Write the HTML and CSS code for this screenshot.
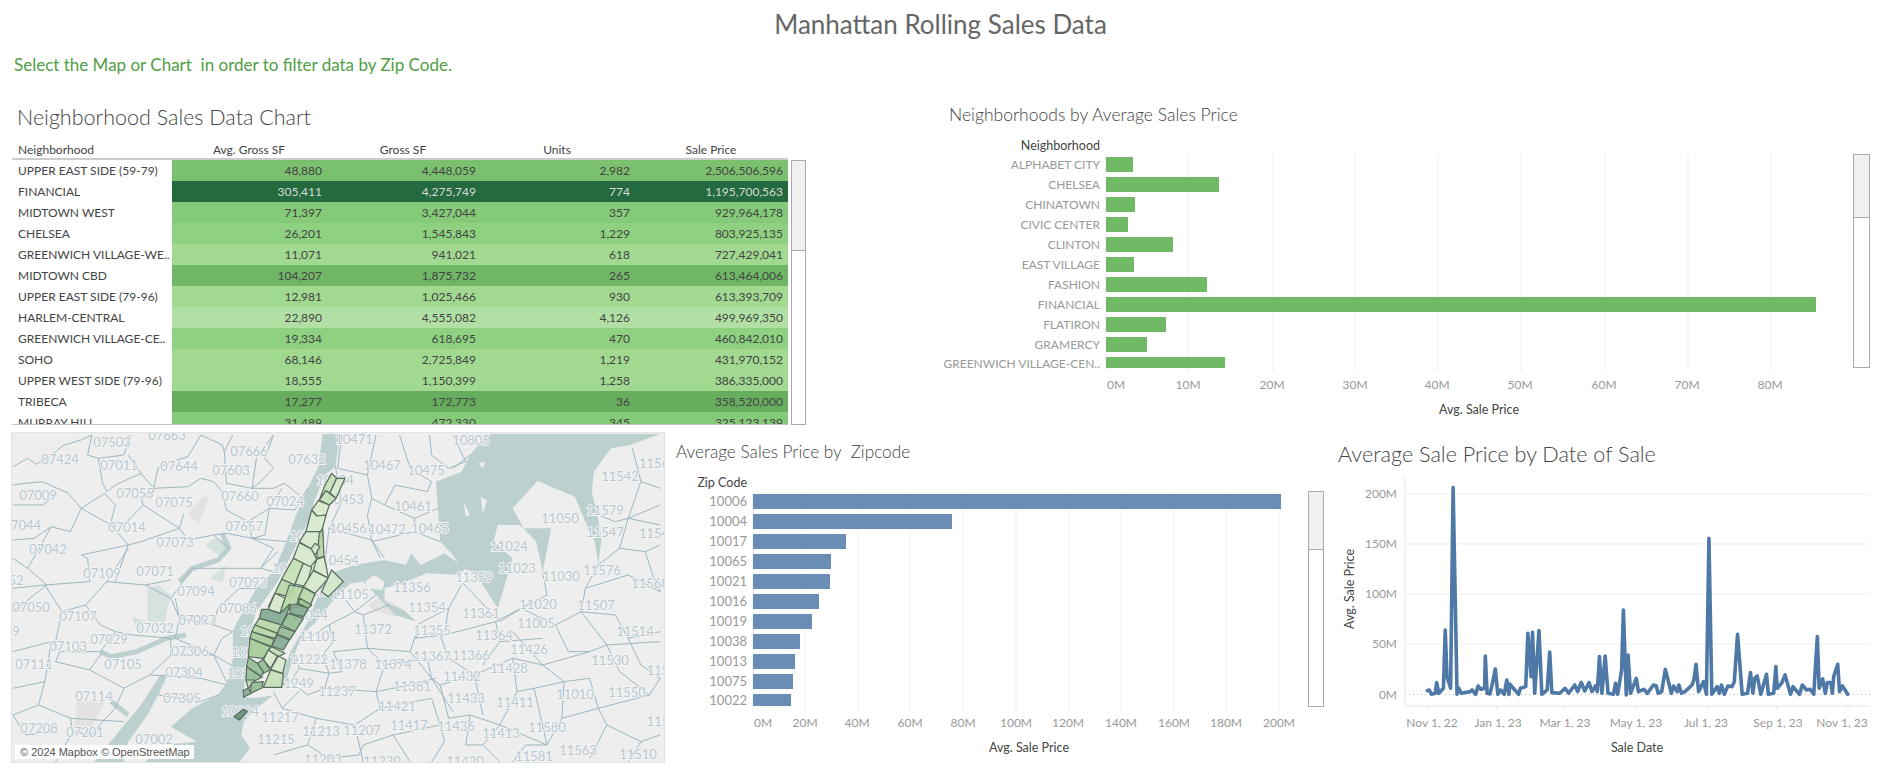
FILE: index.html
```html
<!DOCTYPE html>
<html lang="en">
<head>
    <meta charset="UTF-8">
    <meta name="viewport" content="width=device-width, initial-scale=1.0">
    <title>Manhattan Rolling Sales Data</title>
    <link rel="stylesheet" href="styles.css">
</head>
<body>
<div class="dashboard">
    <h1 class="page-title">Manhattan Rolling Sales Data</h1>
    <p class="hint">Select the Map or Chart&nbsp; in order to filter data by Zip Code.</p>

    <div class="row row-top">
        <section class="sales-panel">
            <h2 class="title-large">Neighborhood Sales Data Chart</h2>
            <div class="sales-head">
                <div class="cell-name">Neighborhood</div>
                <div>Avg. Gross SF</div>
                <div>Gross SF</div>
                <div>Units</div>
                <div>Sale Price</div>
            </div>
            <div class="sales-wrap">
                <div class="sales-body">
                    <div class="sales-row"><div class="cell-name">UPPER EAST SIDE (59-79)</div><div class="shade-3">48,880</div><div class="shade-3">4,448,059</div><div class="shade-3">2,982</div><div class="shade-3">2,506,506,596</div></div>
                    <div class="sales-row"><div class="cell-name">FINANCIAL</div><div class="shade-dark">305,411</div><div class="shade-dark">4,275,749</div><div class="shade-dark">774</div><div class="shade-dark">1,195,700,563</div></div>
                    <div class="sales-row"><div class="cell-name">MIDTOWN WEST</div><div class="shade-4">71,397</div><div class="shade-4">3,427,044</div><div class="shade-4">357</div><div class="shade-4">929,964,178</div></div>
                    <div class="sales-row"><div class="cell-name">CHELSEA</div><div class="shade-5">26,201</div><div class="shade-5">1,545,843</div><div class="shade-5">1,229</div><div class="shade-5">803,925,135</div></div>
                    <div class="sales-row"><div class="cell-name">GREENWICH VILLAGE-WE..</div><div class="shade-6">11,071</div><div class="shade-6">941,021</div><div class="shade-6">618</div><div class="shade-6">727,429,041</div></div>
                    <div class="sales-row"><div class="cell-name">MIDTOWN CBD</div><div class="shade-2">104,207</div><div class="shade-2">1,875,732</div><div class="shade-2">265</div><div class="shade-2">613,464,006</div></div>
                    <div class="sales-row"><div class="cell-name">UPPER EAST SIDE (79-96)</div><div class="shade-6">12,981</div><div class="shade-6">1,025,466</div><div class="shade-6">930</div><div class="shade-6">613,393,709</div></div>
                    <div class="sales-row"><div class="cell-name">HARLEM-CENTRAL</div><div class="shade-7">22,890</div><div class="shade-7">4,555,082</div><div class="shade-7">4,126</div><div class="shade-7">499,969,350</div></div>
                    <div class="sales-row"><div class="cell-name">GREENWICH VILLAGE-CE..</div><div class="shade-5">19,334</div><div class="shade-5">618,695</div><div class="shade-5">470</div><div class="shade-5">460,842,010</div></div>
                    <div class="sales-row"><div class="cell-name">SOHO</div><div class="shade-6">68,146</div><div class="shade-6">2,725,849</div><div class="shade-6">1,219</div><div class="shade-6">431,970,152</div></div>
                    <div class="sales-row"><div class="cell-name">UPPER WEST SIDE (79-96)</div><div class="shade-6">18,555</div><div class="shade-6">1,150,399</div><div class="shade-6">1,258</div><div class="shade-6">386,335,000</div></div>
                    <div class="sales-row"><div class="cell-name">TRIBECA</div><div class="shade-1">17,277</div><div class="shade-1">172,773</div><div class="shade-1">36</div><div class="shade-1">358,520,000</div></div>
                    <div class="sales-row"><div class="cell-name">MURRAY HILL</div><div class="shade-4">31,489</div><div class="shade-4">472,330</div><div class="shade-4">345</div><div class="shade-4">325,123,139</div></div>
                </div>
                <div class="scroller scroller-table"><div class="thumb thumb-table"></div></div>
            </div>
        </section>

        <section class="neighborhood-panel">
            <h2 class="title-small">Neighborhoods by Average Sales Price</h2>
            <div class="chart-row">
                <svg class="chart" width="920" height="290" viewBox="930 134 920 290">
                    <g class="grid">
                        <path d="M1106 154V372M1188 154V372M1273 154V372M1355 154V372M1438 154V372M1521 154V372M1605 154V372M1688 154V372M1771 154V372"/>
                    </g>
                    <g class="bars-green">
                        <rect x="1106" y="157" width="27" height="15"/>
                        <rect x="1106" y="177" width="113" height="15"/>
                        <rect x="1106" y="197" width="29" height="15"/>
                        <rect x="1106" y="217" width="22" height="15"/>
                        <rect x="1106" y="237" width="67" height="15"/>
                        <rect x="1106" y="257" width="28" height="15"/>
                        <rect x="1106" y="277" width="101" height="15"/>
                        <rect x="1106" y="297" width="710" height="15"/>
                        <rect x="1106" y="317" width="60" height="15"/>
                        <rect x="1106" y="337" width="41" height="15"/>
                        <rect x="1106" y="357" width="119" height="11"/>
                    </g>
                    <text class="field-label" x="1100" y="150" text-anchor="end">Neighborhood</text>
                    <g class="tick" text-anchor="end">
                        <text x="1100" y="169">ALPHABET CITY</text>
                        <text x="1100" y="189">CHELSEA</text>
                        <text x="1100" y="209">CHINATOWN</text>
                        <text x="1100" y="229">CIVIC CENTER</text>
                        <text x="1100" y="249">CLINTON</text>
                        <text x="1100" y="269">EAST VILLAGE</text>
                        <text x="1100" y="289">FASHION</text>
                        <text x="1100" y="309">FINANCIAL</text>
                        <text x="1100" y="329">FLATIRON</text>
                        <text x="1100" y="349">GRAMERCY</text>
                        <text x="1100" y="368">GREENWICH VILLAGE-CEN..</text>
                    </g>
                    <g class="tick" text-anchor="middle">
                        <text x="1116" y="389">0M</text>
                        <text x="1188" y="389">10M</text>
                        <text x="1272" y="389">20M</text>
                        <text x="1355" y="389">30M</text>
                        <text x="1437" y="389">40M</text>
                        <text x="1520" y="389">50M</text>
                        <text x="1604" y="389">60M</text>
                        <text x="1687" y="389">70M</text>
                        <text x="1770" y="389">80M</text>
                    </g>
                    <text class="field-label" x="1479" y="414" text-anchor="middle">Avg. Sale Price</text>
                </svg>
                <div class="scroller scroller-neighborhood"><div class="thumb thumb-neighborhood"></div></div>
            </div>
        </section>
    </div>

    <div class="row row-bottom">
        <div class="map">
            <svg width="652" height="329" viewBox="12 433 652 329">
                <rect class="map-land" x="12" y="433" width="652" height="329"/>
                <!-- shapes below are traced in zoomed coordinates -->
                <g transform="translate(0,425) scale(.4273,.3333)">
                    <path class="map-park" d="M450 250L480 210L488 225L465 295L440 270ZM180 830L245 830L215 905L175 905ZM860 540L890 515L945 555L925 575L880 560Z"/>
                    <path class="map-marsh" d="M345 490L370 480L400 510L385 590L345 590ZM490 460L530 420L520 470ZM310 575L345 590L320 620ZM500 340L540 350L520 400L480 360Z"/>
                    <path class="map-water" d="M755 27L795 27L785 125L760 150L735 230L722 290L700 340L690 370L650 470L600 560L590 600L578 680L572 780L566 815L590 820L620 815L640 810L610 840L570 890L565 930L585 970L560 1011L340 1011L380 960L460 950L400 905L450 850L510 810L530 775L545 700L545 620L555 590L600 490L640 440L670 350L690 280L720 190L745 125Z"/>
                    <path class="map-water" d="M375 750L395 745L370 810L345 870L300 950L290 1011L220 1011L275 925L330 840Z"/>
                    <path class="map-water" d="M1140 27L1545 27L1475 60L1430 70L1390 140L1385 200L1398 270L1408 340L1400 418L1392 350L1370 290L1345 215L1258 168L1200 250L1225 310L1215 300L1165 300L1155 350L1200 400L1165 550L1140 500L1110 440L1080 430L1060 390L1030 350L1025 250L1020 170L1080 140L1100 90Z"/>
                    <path class="map-water" d="M1225 310L1290 310L1270 440L1255 350Z"/>
                    <path class="map-water" d="M745 510L775 445L830 420L900 405L950 420L962 385L985 420L1040 385L1090 430L1075 450L1000 445L930 480L900 490L900 530L945 555L975 590L925 570L880 510L850 470L820 475L770 540L740 590L715 620L690 680L665 790L650 790L680 680L720 590Z"/>
                    <path class="map-river" d="M420 470L450 430L510 405L535 370L520 325M235 680L260 695L320 680L390 640L435 630M260 830L300 870"/>
                    <path class="map-land" d="M855 470L875 450L900 470L895 495L860 490ZM1125 215L1140 225L1130 265ZM1085 230L1100 270L1090 275ZM1120 115L1135 110L1130 130Z"/>
                    <g class="zip-lines">
                        <path d="M30 125L65 100L85 118L120 90L150 60L190 45L215 30M215 30L205 90L230 100L290 90L305 30M230 100L240 175L250 200L270 180L330 145L300 90"/>
                        <path d="M330 145L360 190L355 215L370 130L400 110L440 95L470 30M360 190L440 185L470 160L500 170L520 200M525 80L545 30M525 80L530 175L590 190L640 190L665 175L700 210"/>
                        <path d="M640 30L620 100L640 130L610 170L590 190M520 200L530 255L580 290L630 250L690 255M30 180L60 175L100 170L160 205L190 250L245 205L270 240L260 290L290 300L335 240L330 215L360 200"/>
                        <path d="M190 250L165 320L120 305L80 340L30 345M190 250L260 300L300 360L190 390M335 240L420 310L440 345L500 330L535 370M120 305L65 430L110 480L30 560"/>
                        <path d="M190 390L205 400L210 470L105 480L145 560L200 540L250 470L300 370M250 470L340 480L400 465M300 360L330 350L420 310M420 310L430 265M580 290L590 340L530 325L500 330"/>
                        <path d="M630 250L620 330L590 340L640 370L610 430L535 430M450 430L400 520L420 580L410 640L500 690L540 720M420 580L500 600L510 550L560 490L600 490M500 600L545 620"/>
                        <path d="M30 680L120 650L140 680L235 680L270 620L310 630M120 650L105 770L30 790M105 770L90 840L30 870M90 840L165 880L170 920L130 1011M140 680L130 710L210 735L240 680M210 735L290 790L270 850L240 890"/>
                        <path d="M290 790L350 750L400 690L400 640M400 690L500 690L530 770M350 750L470 760L530 780M370 810L470 830L510 810M165 880L290 890"/>
                        <path d="M800 30L790 130L860 150L880 30M860 150L870 220L900 240L925 180L1000 200L1010 170L960 130L935 30M1005 30L1010 90L1050 130L1090 110L1060 30M785 125L800 230L770 310L870 345L900 400"/>
                        <path d="M870 220L860 270L870 350L970 320L1030 350M970 320L970 280L1025 250M870 345L890 400M770 310L760 420L835 400"/>
                        <path d="M1400 420L1450 370L1510 380L1545 360M1450 370L1470 280L1545 240M1470 280L1500 170L1480 70M1500 170L1545 190M1400 270L1440 290L1470 280M1400 420L1370 490L1360 560L1300 600L1220 550M1360 560L1440 570L1470 640L1545 620M1370 490L1470 450L1545 500M1270 440L1280 510L1220 550L1170 590L1080 470"/>
                        <path d="M800 510L830 560L770 600L780 650L755 690L770 745L700 730L690 680M830 560L850 570L860 670L780 680M850 570L910 540M860 670L960 680L980 600L970 640L1040 630L1050 550L1080 480M1040 630L1160 590L1170 650L1200 620M1160 590L1220 550"/>
                        <path d="M960 680L1010 760L1030 780L1110 750L1200 700L1270 720M1200 620L1270 720L1380 680L1420 660L1545 650M1270 720L1320 770L1380 760L1400 850L1520 810L1545 760M1320 770L1315 880L1280 960M1400 850L1420 900L1380 1000"/>
                        <path d="M770 745L760 790L880 800L960 780L1020 760M880 800L890 850L830 900L740 880L660 850L640 800M1030 780L1050 880L1100 870L1170 900L1210 800L1250 790L1320 770M890 850L1010 820L1030 900L920 930L850 960"/>
                        <path d="M740 880L720 960L770 1000L840 990L850 960M1170 900L1130 960L1170 1011M1280 960L1230 960L1200 1011M1420 900L1500 950L1545 930M1030 900L1040 950L1010 1011M720 960L640 990"/>
                        <path d="M880 510L830 560M1050 550L975 600L975 640M1170 650L1130 720M1010 760L1060 860M900 720L1000 700"/>
                        <path d="M30 240L100 240L130 210M30 400L65 430M30 490L105 480M145 560L130 650M200 540L235 600L270 620M400 520L340 480M310 630L400 640M500 690L520 640L545 620M30 870L60 930L130 920M240 890L215 930L170 920M470 30L520 60L525 80M590 190L600 100L640 30M690 255L720 190M630 250L660 190M610 430L650 380M590 340L670 350M610 430L640 440M450 430L535 430M420 580L410 520M300 360L270 470"/>
                        <path d="M1100 90L1060 130M900 240L970 280M1030 630L1050 700L1110 750M1170 650L1270 640M1300 600L1330 680L1380 680M1360 560L1420 660M1470 640L1500 720L1545 760M1420 660L1450 740L1520 810M1210 800L1200 700M1110 750L1130 870M1250 790L1280 960M700 730L680 770L720 810L760 790M660 850L700 800M830 900L850 1011M920 930L960 1011M1100 870L1090 960L1130 960M1500 950L1470 1011M1315 880L1400 850M1170 900L1280 960M1545 300L1470 280M1510 380L1530 460L1545 500M770 600L720 640M860 670L900 720L880 800M780 680L800 740L770 745M1000 700L1010 760"/>
                    </g>
                </g>
                <g class="zip-labels">
                    <text x="112" y="447">07503</text><text x="167" y="440">07663</text><text x="249" y="456">07666</text><text x="307" y="464">07632</text><text x="354" y="444">10471</text><text x="471" y="445">10805</text>
                    <text x="60" y="464">07424</text><text x="119" y="470">07011</text><text x="179" y="471">07644</text><text x="231" y="475">07603</text><text x="382" y="470">10467</text><text x="426" y="475">10475</text><text x="620" y="481">11542</text><text x="654" y="468">1156</text>
                    <text x="335" y="485">10034</text><text x="38" y="500">07009</text><text x="135" y="498">07055</text><text x="174" y="507">07075</text><text x="240" y="501">07660</text><text x="285" y="506">07024</text><text x="345" y="504">10453</text><text x="413" y="511">10461</text><text x="605" y="515">11579</text><text x="560" y="523">11050</text>
                    <text x="26" y="530">7044</text><text x="127" y="532">07014</text><text x="244" y="531">07657</text><text x="348" y="533">10456</text><text x="387" y="534">10472</text><text x="430" y="533">10465</text><text x="605" y="537">11547</text><text x="654" y="538">1154</text>
                    <text x="175" y="547">07073</text><text x="48" y="554">07042</text><text x="308" y="541">10031</text><text x="509" y="551">11024</text><text x="340" y="565">10454</text><text x="102" y="578">07109</text><text x="155" y="576">07071</text><text x="291" y="573">10025</text><text x="517" y="573">11023</text><text x="602" y="575">11576</text><text x="561" y="581">11030</text><text x="474" y="582">11359</text>
                    <text x="16" y="585">52</text><text x="248" y="587">07093</text><text x="650" y="588">11568</text><text x="196" y="596">07094</text><text x="412" y="592">11356</text><text x="308" y="596">10128</text><text x="350" y="599">11105</text><text x="31" y="612">07050</text><text x="238" y="613">07086</text><text x="427" y="612">11354</text><text x="538" y="609">11020</text><text x="596" y="610">11507</text>
                    <text x="78" y="621">07107</text><text x="309" y="620">10044</text><text x="481" y="618">11361</text><text x="197" y="625">07097</text><text x="155" y="633">07032</text><text x="373" y="634">11372</text><text x="432" y="635">11355</text><text x="536" y="628">11005</text><text x="635" y="636">11514</text><text x="16" y="636">9</text><text x="259" y="636">10001</text>
                    <text x="494" y="640">11364</text><text x="318" y="641">11101</text><text x="109" y="644">07029</text><text x="68" y="651">07103</text><text x="529" y="654">11426</text><text x="190" y="656">07306</text><text x="250" y="657">10014</text><text x="432" y="661">11367</text><text x="471" y="660">11366</text><text x="610" y="665">11530</text>
                    <text x="34" y="669">07111</text><text x="123" y="669">07105</text><text x="309" y="664">11222</text><text x="348" y="669">11378</text><text x="393" y="669">11374</text><text x="509" y="673">11428</text><text x="184" y="677">07304</text><text x="246" y="678">10282</text><text x="462" y="681">11432</text><text x="658" y="675">115</text>
                    <text x="295" y="688">11249</text><text x="412" y="691">11381</text><text x="337" y="696">11237</text><text x="94" y="701">07114</text><text x="182" y="703">07305</text><text x="466" y="703">11433</text><text x="575" y="699">11010</text><text x="627" y="697">11550</text><text x="515" y="707">11411</text><text x="397" y="711">11421</text>
                    <text x="240" y="716">10004</text><text x="280" y="722">11217</text><text x="409" y="730">11417</text><text x="456" y="731">11436</text><text x="547" y="732">11580</text><text x="658" y="726">115</text><text x="39" y="733">07208</text><text x="85" y="737">07201</text><text x="321" y="736">11213</text><text x="362" y="735">11207</text><text x="501" y="738">11413</text>
                    <text x="154" y="744">07002</text><text x="276" y="744">11215</text><text x="578" y="755">11563</text><text x="638" y="759">11510</text><text x="534" y="761">11581</text><text x="323" y="764">11203</text><text x="382" y="766">11230</text><text x="465" y="766">11420</text>
                </g>
                <g class="zips" transform="translate(200,450) scale(.3333)">
                    <path class="zip-c2" d="M395 70L410 85L390 128L378 122L358 150L375 105Z"/>
                    <path class="zip-c1" d="M410 85L435 85L408 145L390 128Z"/>
                    <path class="zip-c2" d="M358 150L378 122L408 145L388 165Z"/>
                    <path class="zip-c1" d="M335 180L355 152L388 165L378 195L350 198Z"/>
                    <path class="zip-c1" d="M335 180L350 198L378 195L365 245L318 245Z"/>
                    <path class="zip-c1" d="M318 245L365 245L358 285L335 298L298 275Z"/>
                    <path class="zip-c3" d="M358 250L368 235L372 320L350 325Z"/>
                    <path class="zip-c1" d="M330 300L345 280L360 290L345 315Z"/>
                    <path class="zip-c1" d="M298 278L335 298L350 328L330 352L280 325Z"/>
                    <path class="zip-c1" d="M372 320L350 328L340 360L385 385L378 345Z"/>
                    <path class="zip-c2" d="M280 325L310 340L285 405L245 388Z"/>
                    <path class="zip-c1" d="M310 340L335 352L318 410L285 402Z"/>
                    <path class="zip-c1" d="M340 362L385 385L345 430L310 410Z"/>
                    <path class="zip-c1" d="M395 360L430 395L385 440L365 425Z"/>
                    <path class="zip-c3" d="M245 388L285 405L268 440L225 430L205 470Z"/>
                    <path class="zip-c1" d="M225 430L255 445L240 490L205 478Z"/>
                    <path class="zip-c3" d="M268 405L310 412L295 470L265 478L240 490L255 445Z"/>
                    <path class="zip-c3" d="M310 412L345 432L330 468L295 445Z"/>
                    <path class="zip-c4" d="M295 445L330 468L290 470Z"/>
                    <path class="zip-c6" d="M185 478L205 478L240 490L270 462L265 480L245 525L178 505Z"/>
                    <path class="zip-c6" d="M270 465L290 462L325 475L310 500L270 490Z"/>
                    <path class="zip-c4" d="M300 445L335 465L325 475L295 460Z"/>
                    <path class="zip-c5" d="M265 490L310 505L285 545L245 525Z"/>
                    <path class="zip-c3" d="M178 505L245 525L232 550L165 525Z"/>
                    <path class="zip-c3" d="M165 525L232 550L225 565L155 545Z"/>
                    <path class="zip-c4" d="M155 545L222 568L215 590L150 565Z"/>
                    <path class="zip-c5" d="M240 530L285 545L270 568L232 552Z"/>
                    <path class="zip-c6" d="M232 555L268 570L250 600L215 588Z"/>
                    <path class="zip-c4" d="M150 565L212 592L190 625L145 620Z"/>
                    <path class="zip-c2" d="M215 590L255 610L235 620L205 600Z"/>
                    <path class="zip-c1" d="M205 600L232 618L212 655L190 630Z"/>
                    <path class="zip-c1" d="M235 618L258 630L248 670L212 658Z"/>
                    <path class="zip-c5" d="M190 628L210 660L190 670L172 640Z"/>
                    <path class="zip-c5" d="M145 622L172 640L190 665L185 680L140 650Z"/>
                    <path class="zip-c2" d="M212 660L250 672L245 712L190 712Z"/>
                    <path class="zip-c5" d="M140 650L185 682L155 698L138 690Z"/>
                    <path class="zip-c2" d="M138 690L165 690L145 715Z"/>
                    <path class="zip-c5" d="M155 698L190 695L185 715L150 730Z"/>
                    <path class="zip-c6" d="M130 720L145 715L155 730L130 742Z"/>
                    <path class="zip-c7" d="M102 800L130 778L142 785L118 810Z"/>
                </g>
            </svg>
            <div class="map-credit">© 2024 Mapbox © OpenStreetMap</div>
        </div>

        <section class="zip-panel">
            <h2 class="title-zip">Average Sales Price by&nbsp; Zipcode</h2>
            <div class="chart-row">
                <svg class="chart" width="636" height="291" viewBox="670 471 636 291">
                    <g class="grid">
                        <path d="M753 491V712M805 491V712M858 491V712M910 491V712M963 491V712M1016 491V712M1069 491V712M1121 491V712M1174 491V712M1226 491V712M1279 491V712"/>
                    </g>
                    <g class="bars-blue">
                        <rect x="753" y="494" width="528" height="15"/>
                        <rect x="753" y="514" width="199" height="15"/>
                        <rect x="753" y="534" width="93" height="15"/>
                        <rect x="753" y="554" width="78" height="15"/>
                        <rect x="753" y="574" width="77" height="15"/>
                        <rect x="753" y="594" width="66" height="15"/>
                        <rect x="753" y="614" width="59" height="15"/>
                        <rect x="753" y="634" width="47" height="15"/>
                        <rect x="753" y="654" width="42" height="15"/>
                        <rect x="753" y="674" width="40" height="15"/>
                        <rect x="753" y="694" width="38" height="12"/>
                    </g>
                    <text class="field-label" x="747" y="487" text-anchor="end">Zip Code</text>
                    <g class="tick tick-zip" text-anchor="end">
                        <text x="747" y="506">10006</text>
                        <text x="747" y="526">10004</text>
                        <text x="747" y="546">10017</text>
                        <text x="747" y="566">10065</text>
                        <text x="747" y="586">10021</text>
                        <text x="747" y="606">10016</text>
                        <text x="747" y="626">10019</text>
                        <text x="747" y="646">10038</text>
                        <text x="747" y="666">10013</text>
                        <text x="747" y="686">10075</text>
                        <text x="747" y="705">10022</text>
                    </g>
                    <g class="tick" text-anchor="middle">
                        <text x="763" y="727">0M</text>
                        <text x="805" y="727">20M</text>
                        <text x="857" y="727">40M</text>
                        <text x="910" y="727">60M</text>
                        <text x="963" y="727">80M</text>
                        <text x="1016" y="727">100M</text>
                        <text x="1068" y="727">120M</text>
                        <text x="1121" y="727">140M</text>
                        <text x="1174" y="727">160M</text>
                        <text x="1226" y="727">180M</text>
                        <text x="1279" y="727">200M</text>
                    </g>
                    <text class="field-label" x="1029" y="752" text-anchor="middle">Avg. Sale Price</text>
                </svg>
                <div class="scroller scroller-zip"><div class="thumb thumb-zip"></div></div>
            </div>
        </section>

        <section class="date-panel">
            <h2 class="title-date">Average Sale Price by Date of Sale</h2>
            <svg class="chart" width="551" height="291" viewBox="1330 471 551 291">
                <g class="grid">
                    <path d="M1405 494H1870M1405 544H1870M1405 594H1870M1405 644H1870"/>
                </g>
                <path class="zero-line" d="M1405 694.5H1870"/>
                <path class="axis" d="M1405 477V706H1870"/>
                <path class="axis" d="M1427 706v4M1497 706v4M1565 706v4M1635 706v4M1707 706v4M1777 706v4M1848 706v4"/>
                <g transform="translate(1320,430) scale(.3578,.3333)">
                    <path class="sales-line" d="M300 782L305 780L312 793L322 790L326 758L332 790L345 775L350 600L355 740L365 775L372 173L383 793L388 775L395 790L420 785L425 780L435 793L442 768L450 778L460 775L462 678L467 790L475 792L482 760L490 717L497 793L505 780L515 793L522 750L528 793L530 762L555 793L560 775L575 770L581 610L590 740L594 607L600 790L612 602L620 793L635 780L642 666L648 788L670 790L685 775L695 790L712 765L720 785L730 757L740 783L752 758L760 785L770 768L775 785L781 680L788 790L797 678L805 790L820 793L826 760L832 793L843 720L848 540L856 795L861 675L868 790L884 745L890 785L905 778L915 790L932 765L940 768L945 790L955 785L965 718L982 790L988 768L998 785L1003 765L1010 790L1020 785L1040 765L1045 750L1051 703L1058 785L1072 755L1080 793L1087 325L1095 793L1110 770L1116 790L1122 765L1130 793L1140 768L1152 770L1158 755L1167 613L1180 793L1195 790L1203 728L1210 790L1215 745L1222 738L1232 793L1248 733L1253 793L1268 790L1274 710L1278 775L1290 760L1300 735L1305 755L1315 793L1322 770L1340 793L1348 765L1360 780L1370 778L1380 793L1390 620L1395 775L1405 747L1412 790L1418 758L1428 758L1432 790L1436 738L1447 703L1452 785L1460 768L1475 793"/>
                </g>
                <g class="tick" text-anchor="end">
                    <text x="1397" y="498">200M</text>
                    <text x="1397" y="548">150M</text>
                    <text x="1397" y="598">100M</text>
                    <text x="1397" y="648">50M</text>
                    <text x="1397" y="699">0M</text>
                </g>
                <g class="tick" text-anchor="middle">
                    <text x="1432" y="727">Nov 1, 22</text>
                    <text x="1498" y="727">Jan 1, 23</text>
                    <text x="1565" y="727">Mar 1, 23</text>
                    <text x="1636" y="727">May 1, 23</text>
                    <text x="1706" y="727">Jul 1, 23</text>
                    <text x="1778" y="727">Sep 1, 23</text>
                    <text x="1842" y="727">Nov 1, 23</text>
                </g>
                <text class="field-label" x="1637" y="752" text-anchor="middle">Sale Date</text>
                <text class="field-label" text-anchor="middle" transform="translate(1354,589) rotate(-90)">Avg. Sale Price</text>
            </svg>
        </section>
    </div>
</div>
</body>
</html>
```

FILE: styles.css
```css
* {
    box-sizing: border-box;
}
body {
    margin: 0;
    background-color: #fff;
    font-family: Lato, "Open Sans", sans-serif;
    color: #555;
}
.dashboard {
    width: 1881px;
    height: 774px;
    overflow: hidden;
}
.page-title {
    margin: 0;
    height: 48px;
    line-height: 48px;
    text-align: center;
    font-size: 26px;
    font-weight: 400;
    color: #666;
}
.hint {
    margin: 0;
    height: 52px;
    padding: 6px 0 0 14px;
    line-height: 22px;
    font-size: 17px;
    color: #4f9e45;
}
.row {
    display: flex;
}
.row-top {
    height: 333px;
}
.row-bottom {
    height: 341px;
}
h2 {
    margin: 0;
    font-weight: 300;
    color: #444;
}
.title-large {
    height: 34px;
    line-height: 34px;
    padding-left: 5px;
    font-size: 21.5px;
}
.title-small {
    height: 34px;
    line-height: 30px;
    padding-left: 19px;
    font-size: 17.5px;
}
.title-zip {
    height: 38px;
    line-height: 38px;
    padding-left: 6px;
    font-size: 17.2px;
}
.title-date {
    height: 38px;
    line-height: 42px;
    padding-left: 8px;
    font-size: 21.6px;
}

/* table */
.sales-panel {
    width: 794px;
    margin-left: 12px;
    flex: none;
}
.sales-head, .sales-row {
    display: grid;
    grid-template-columns: 160px repeat(4, 154px);
    width: 776px;
    font-size: 12px;
}
.sales-head {
    height: 26px;
    line-height: 32px;
    border-bottom: 2px solid #ccc;
    color: #444;
    text-align: center;
}
.sales-head .cell-name {
    text-align: left;
}
.sales-wrap {
    display: flex;
    gap: 3px;
}
.sales-body {
    width: 776px;
    height: 265px;
    overflow: hidden;
    border-bottom: 1px solid #c4c4c4;
}
.sales-row {
    height: 21px;
    line-height: 21px;
    text-align: right;
    color: #444;
}
.sales-row div {
    padding-right: 5px;
}
.sales-row .cell-name, .sales-head .cell-name {
    padding-left: 6px;
    text-align: left;
    white-space: nowrap;
    overflow: hidden;
}
.sales-row div:nth-child(2), .sales-row div:nth-child(3), .sales-row div:nth-child(4) {
    padding-right: 4px;
}
.shade-1 { background-color: #66ae5e; }
.shade-2 { background-color: #6fb765; }
.shade-3 { background-color: #7bc06f; }
.shade-4 { background-color: #85ca78; }
.shade-5 { background-color: #8ed281; }
.shade-6 { background-color: #a0d98f; }
.shade-7 { background-color: #b1e0a5; }
.sales-row .shade-dark {
    background-color: #236a3f;
    color: #d8d8d8;
}

/* scrollbars */
.scroller {
    flex: none;
    background-color: #fff;
    border: 1px solid #aaa;
}
.thumb {
    background-color: #f0f0f0;
    border-bottom: 1px solid #aaa;
}
.scroller-table {
    width: 15px;
    height: 265px;
}
.thumb-table {
    height: 90px;
}
.chart-row {
    display: flex;
}
.scroller-neighborhood {
    width: 17px;
    height: 214px;
    margin: 20px 0 0 3px;
}
.thumb-neighborhood {
    height: 63px;
}
.scroller-zip {
    width: 16px;
    height: 216px;
    margin: 20px 0 0 2px;
}
.thumb-zip {
    height: 58px;
}

/* panels */
.neighborhood-panel {
    width: 957px;
    margin-left: 124px;
    flex: none;
}
.zip-panel {
    width: 654px;
    margin-left: 6px;
    flex: none;
}
.date-panel {
    width: 551px;
    margin-left: 6px;
    flex: none;
}
.chart {
    display: block;
    flex: none;
}
.grid path {
    fill: none;
    stroke: #efefef;
    stroke-width: 1;
}
.bars-green rect {
    fill: #70b965;
}
.bars-blue rect {
    fill: #6a8db5;
}
.tick text {
    font-size: 12px;
    fill: #999;
}
.tick-zip text {
    font-size: 13px;
}
.field-label {
    font-size: 12.5px;
    fill: #444;
}
.axis {
    fill: none;
    stroke: #e6e6e6;
}
.zero-line {
    fill: none;
    stroke: #bbb;
    stroke-dasharray: 1 3;
}
.sales-line {
    fill: none;
    stroke: #4e79a7;
    stroke-width: 3.6;
    stroke-linejoin: round;
    stroke-linecap: round;
    vector-effect: non-scaling-stroke;
}

/* map */
.map {
    position: relative;
    width: 652px;
    height: 329px;
    margin-left: 12px;
    flex: none;
    outline: 1px solid #e2e2e2;
}
.map svg {
    display: block;
}
.map-land {
    fill: #eeeeee;
}
.map-water {
    fill: #bdd0d0;
}
.map-park {
    fill: #e2e2e2;
}
.map-marsh {
    fill: #d6e2df;
}
.map-river {
    fill: none;
    stroke: #bdd0d0;
    stroke-width: 5px;
    vector-effect: non-scaling-stroke;
}
.zip-lines path {
    fill: none;
    stroke: #9db7c3;
    stroke-width: 1;
    vector-effect: non-scaling-stroke;
}
.zip-labels text {
    font-size: 13px;
    text-anchor: middle;
    fill: #b8c8d2;
    stroke: #f4f4f4;
    stroke-width: 2px;
    paint-order: stroke;
}
.zips path {
    stroke: #566b5d;
    stroke-width: 3.6;
    stroke-linejoin: round;
    fill-opacity: .88;
}
.zip-c1 { fill: #d6e9cb; }
.zip-c2 { fill: #c4e0b4; }
.zip-c3 { fill: #b5d7a4; }
.zip-c4 { fill: #a3cb95; }
.zip-c5 { fill: #8fb98f; }
.zip-c6 { fill: #7ea78f; }
.zip-c7 { fill: #5d8f72; }
.map-credit {
    position: absolute;
    left: 3px;
    bottom: 3px;
    height: 14px;
    padding: 0 4px 0 5px;
    line-height: 14px;
    background-color: #fff;
    font-family: "Liberation Sans", sans-serif;
    font-size: 11px;
    color: #555;
}
```
